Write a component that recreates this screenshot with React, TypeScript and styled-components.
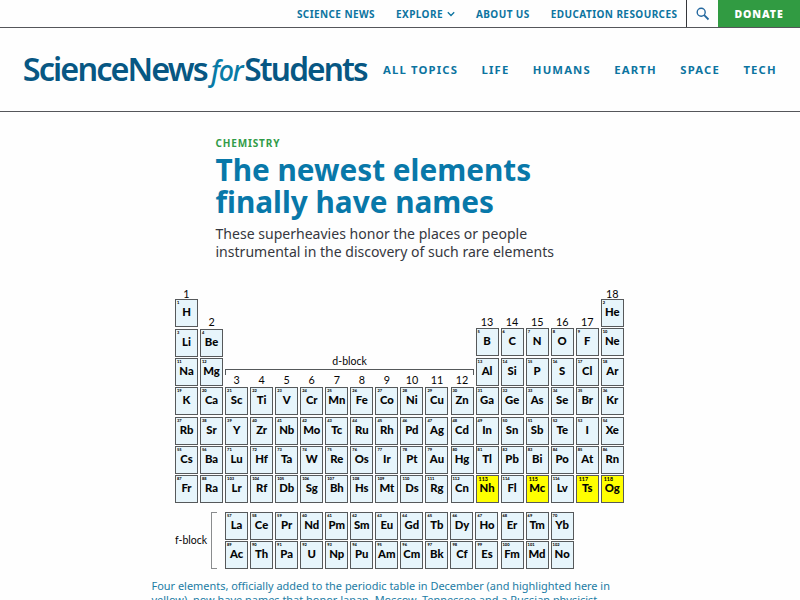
import React from "react";
import styled, { createGlobalStyle } from "styled-components";

const GlobalStyle = createGlobalStyle`
  * { box-sizing: border-box; }
  body {
    margin: 0;
    width: 800px;
    height: 600px;
    overflow: hidden;
    background: #fefefe;
    font-family: "Noto Sans", sans-serif;
    color: #363840;
  }
  h1, p { margin: 0; }
`;

const Page = styled.div`
  height: 600px;
  overflow: hidden;
`;

const TopBar = styled.nav`
  display: flex;
  justify-content: flex-end;
  height: 28px;
  border-bottom: 1px solid #55565a;
`;

const TopLinks = styled.div`
  display: flex;
  align-items: center;
  gap: 21px;
  padding-right: 8.6px;
`;

const TopLink = styled.a`
  display: flex;
  align-items: center;
  gap: 4px;
  color: #0c74a0;
  font-size: 10px;
  font-weight: 700;
  letter-spacing: 0.42px;
  white-space: nowrap;
`;

const SearchButton = styled.button`
  width: 32px;
  padding: 0;
  display: flex;
  align-items: center;
  justify-content: center;
  background: none;
  border: 0;
  border-left: 1px solid #35363a;
  color: #24689f;
`;

const Donate = styled.a`
  width: 82px;
  display: flex;
  align-items: center;
  justify-content: center;
  background: #319b42;
  color: #fff;
  font-size: 10.5px;
  font-weight: 900;
  letter-spacing: 0.9px;
`;

const Header = styled.header`
  display: flex;
  align-items: center;
  height: 84px;
  padding-left: 20px;
  border-bottom: 1px solid #55565a;
`;

const MainNav = styled.nav`
  display: flex;
  gap: 23.5px;
  margin-left: 11px;
  padding-bottom: 1px;
`;

const MainLink = styled.a`
  color: #0c74a0;
  font-size: 11.3px;
  font-weight: 700;
  letter-spacing: 1.15px;
  white-space: nowrap;
`;

const ArticleHead = styled.section`
  padding: 24px 0 0 215.5px;
`;

const Category = styled.div`
  color: #319b48;
  font-size: 10px;
  line-height: 14px;
  font-weight: 700;
  letter-spacing: 0.85px;
`;

const Title = styled.h1`
  margin-top: 4px;
  width: 340px;
  color: #0878a9;
  font-size: 29.75px;
  line-height: 32px;
  font-weight: 700;
`;

const Deck = styled.p`
  margin-top: 7px;
  width: 360px;
  font-size: 14.05px;
  line-height: 18px;
`;

const Figure = styled.figure`
  margin: 26px 0 0 175px;
  width: 451px;
  font-family: Lato, sans-serif;
  color: #050505;
`;

const Table = styled.div`
  display: grid;
  grid-template-columns: repeat(18, 25.06px);
  grid-template-rows: 12px 30px 29px 29px 30px 29px 29px 28px;
`;

const Cell = styled.div<{ $col: number; $row: number; $hot?: boolean; $lift?: boolean }>`
  grid-column: ${(p) => p.$col};
  grid-row: ${(p) => p.$row};
  display: flex;
  flex-direction: column;
  width: 23px;
  height: 28px;
  margin-top: ${(p) => (p.$lift ? "-1px" : "0")};
  border: 1px solid #56595b;
  background: ${(p) => (p.$hot ? "#ffff00" : "#e7f5fb")};
`;

const AtomicNumber = styled.span<{ $hot?: boolean }>`
  height: 5px;
  padding-left: ${(p) => (p.$hot ? 2 : 1)}px;
  font-size: ${(p) => (p.$hot ? 5.3 : 4)}px;
  line-height: ${(p) => (p.$hot ? 7 : 5)}px;
  font-weight: 900;
`;

const Symbol = styled.span`
  font-size: 11.3px;
  line-height: 14px;
  font-weight: 900;
  text-align: center;
  white-space: nowrap;
`;

const GroupLabel = styled.span<{ $col: number; $row: number; $gap: number }>`
  grid-column: ${(p) => p.$col};
  grid-row: ${(p) => p.$row};
  align-self: end;
  width: 23px;
  margin-bottom: ${(p) => p.$gap}px;
  font-size: 10.8px;
  line-height: 11px;
  text-align: center;
`;

const DBlock = styled.div`
  grid-column: 3 / 13;
  grid-row: 3 / 5;
  align-self: end;
  width: 249px;
  margin-bottom: 12px;
  font-size: 10.5px;
  line-height: 12px;
  text-align: center;
`;

const DBracket = styled.div`
  height: 6px;
  margin-top: 2px;
  border: 1px solid #55585a;
  border-bottom: 0;
`;

const FBlock = styled.div`
  display: flex;
  align-items: center;
  margin-top: 9px;
  font-size: 10.5px;
`;

const FLabel = styled.span`
  width: 36px;
  padding-bottom: 2px;
  white-space: nowrap;
`;

const FBracket = styled.div`
  width: 6px;
  height: 57px;
  margin-right: 8px;
  border: 1px solid #8a8c8e;
  border-right: 0;
`;

const FGrid = styled.div`
  display: grid;
  grid-template-columns: repeat(14, 25.06px);
  grid-template-rows: 29px 28px;
`;

const Caption = styled.p`
  margin: 10px 0 0 151.5px;
  width: 480px;
  color: #1c7ca4;
  font-size: 10.94px;
  line-height: 14px;
  white-space: nowrap;
`;

type Element = [symbol: string, number: number, col: number, row: number];

const run = (symbols: string, first: number, col: number, row: number): Element[] =>
  symbols.split(" ").map((s, i) => [s, first + i, col + i, row]);

const mainElements: Element[] = [
  ...run("H", 1, 1, 2),
  ...run("He", 2, 18, 2),
  ...run("Li Be", 3, 1, 3),
  ...run("B C N O F Ne", 5, 13, 3),
  ...run("Na Mg", 11, 1, 4),
  ...run("Al Si P S Cl Ar", 13, 13, 4),
  ...run("K Ca Sc Ti V Cr Mn Fe Co Ni Cu Zn Ga Ge As Se Br Kr", 19, 1, 5),
  ...run("Rb Sr Y Zr Nb Mo Tc Ru Rh Pd Ag Cd In Sn Sb Te I Xe", 37, 1, 6),
  ...run("Cs Ba", 55, 1, 7),
  ...run("Lu Hf Ta W Re Os Ir Pt Au Hg Tl Pb Bi Po At Rn", 71, 3, 7),
  ...run("Fr Ra", 87, 1, 8),
  ...run("Lr Rf Db Sg Bh Hs Mt Ds Rg Cn Nh Fl Mc Lv Ts Og", 103, 3, 8),
];

const fElements: Element[] = [
  ...run("La Ce Pr Nd Pm Sm Eu Gd Tb Dy Ho Er Tm Yb", 57, 1, 1),
  ...run("Ac Th Pa U Np Pu Am Cm Bk Cf Es Fm Md No", 89, 1, 2),
];

const highlighted = [113, 115, 117, 118];

const labelPlace = (g: number) => {
  if (g === 1 || g === 18) return { row: 1, gap: 0 };
  if (g === 2 || g > 12) return { row: 2, gap: 2 };
  return { row: 4, gap: 2 };
};

function ElementCell({ data: [symbol, number, col, row] }: { data: Element }) {
  const hot = highlighted.includes(number);
  return (
    <Cell $col={col} $row={row} $hot={hot} $lift={number >= 5 && number <= 10}>
      <AtomicNumber $hot={hot}>{number}</AtomicNumber>
      <Symbol>{symbol}</Symbol>
    </Cell>
  );
}

function Logo() {
  return (
    <svg width="352" height="60" viewBox="0 0 352 60" fontFamily="Noto Sans, sans-serif">
      <g fill="#075783" fontWeight="600" fontSize="32.5">
        <text x="2.8" y="41.3" textLength="184" lengthAdjust="spacingAndGlyphs" letterSpacing="-1.9">ScienceNews</text>
        <text x="224.3" y="41.3" textLength="122.5" lengthAdjust="spacingAndGlyphs" letterSpacing="-1.9">Students</text>
      </g>
      <text x="191" y="41.3" fill="#087ba6" fontSize="28" fontWeight="500" fontStyle="italic" textLength="31.5" lengthAdjust="spacingAndGlyphs" letterSpacing="-1.2">for</text>
    </svg>
  );
}

export default function App() {
  return (
    <Page>
      <GlobalStyle />
      <TopBar>
        <TopLinks>
          <TopLink>SCIENCE NEWS</TopLink>
          <TopLink>
            EXPLORE
            <svg width="8" height="6" viewBox="0 0 8 6" fill="none" stroke="currentColor" strokeWidth="1.3">
              <path d="M.8 1.3 4 4.5 7.2 1.3" />
            </svg>
          </TopLink>
          <TopLink>ABOUT US</TopLink>
          <TopLink>EDUCATION RESOURCES</TopLink>
        </TopLinks>
        <SearchButton aria-label="Search">
          <svg width="14" height="14" viewBox="0 0 14 14" fill="none" stroke="currentColor">
            <circle cx="5.2" cy="5.2" r="4" strokeWidth="1.4" />
            <path d="m8.2 8.2 4.3 4.3" strokeWidth="1.8" />
          </svg>
        </SearchButton>
        <Donate>DONATE</Donate>
      </TopBar>
      <Header>
        <Logo />
        <MainNav>
          {["ALL TOPICS", "LIFE", "HUMANS", "EARTH", "SPACE", "TECH"].map((t) => (
            <MainLink key={t}>{t}</MainLink>
          ))}
        </MainNav>
      </Header>
      <ArticleHead>
        <Category>CHEMISTRY</Category>
        <Title>The newest elements<br />finally have names</Title>
        <Deck>These superheavies honor the places or people<br />instrumental in the discovery of such rare elements</Deck>
      </ArticleHead>
      <Figure>
        <Table>
          {Array.from({ length: 18 }, (_, i) => {
            const { row, gap } = labelPlace(i + 1);
            return <GroupLabel key={i} $col={i + 1} $row={row} $gap={gap}>{i + 1}</GroupLabel>;
          })}
          <DBlock>
            d-block
            <DBracket />
          </DBlock>
          {mainElements.map((e) => <ElementCell key={e[0]} data={e} />)}
        </Table>
        <FBlock>
          <FLabel>f-block</FLabel>
          <FBracket />
          <FGrid>
            {fElements.map((e) => <ElementCell key={e[0]} data={e} />)}
          </FGrid>
        </FBlock>
      </Figure>
      <Caption>
        Four elements, officially added to the periodic table in December (and highlighted here in<br />
        yellow), now have names that honor Japan, Moscow, Tennessee and a Russian physicist.
      </Caption>
    </Page>
  );
}
